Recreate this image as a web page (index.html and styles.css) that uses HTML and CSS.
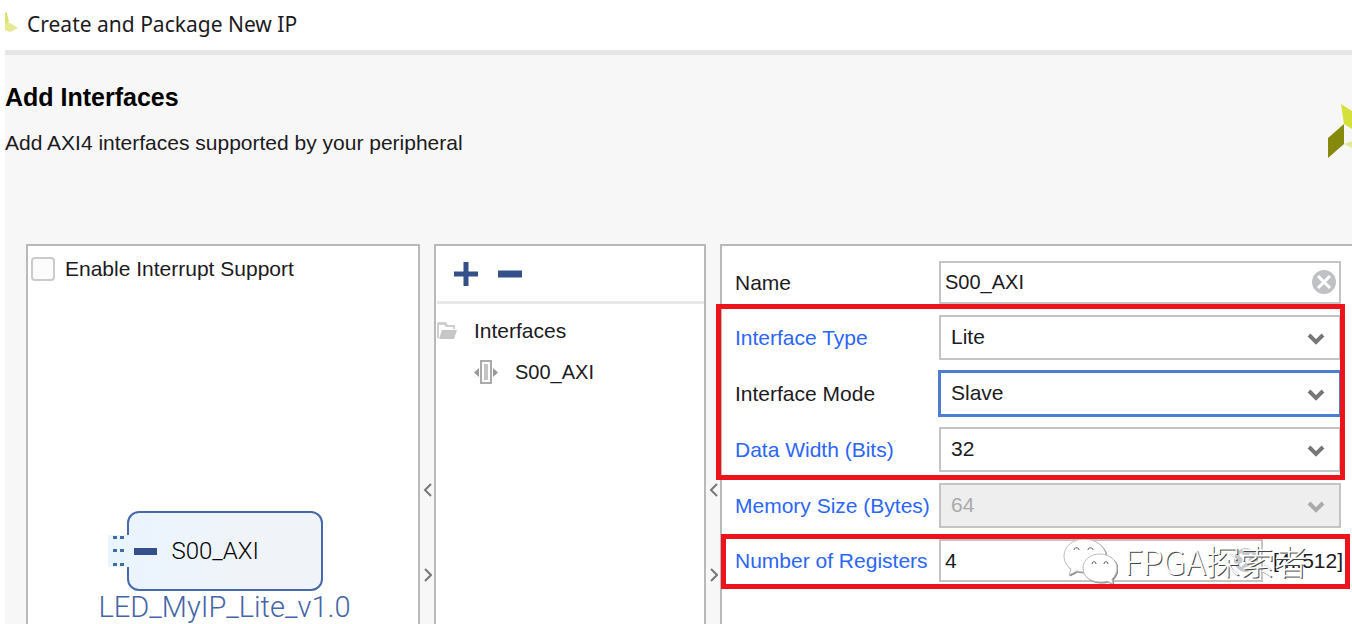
FILE: index.html
```html
<!DOCTYPE html>
<html lang="en">
<head>
<meta charset="utf-8">
<title>Create and Package New IP</title>
<link rel="stylesheet" href="styles.css">
</head>
<body>
<div class="window">
  <header class="titlebar">
    <svg class="titlebar-icon" width="14" height="22" viewBox="0 0 14 22" aria-hidden="true">
      <path d="M0 1 2 2 4 11 0 13z" fill="#dde36a"/>
      <path d="M0 12 5 12 13 17 5 21 0 19z" fill="#e4e98f"/>
    </svg>
    <span>Create and Package New IP</span>
  </header>

  <section class="intro">
    <div>
      <h1>Add Interfaces</h1>
      <p>Add AXI4 interfaces supported by your peripheral</p>
    </div>
    <svg class="logo" width="25" height="56" viewBox="0 0 25 56" aria-hidden="true">
      <path d="M14 0 25 7V25L17 20z" fill="#d5e03a"/>
      <path d="M17 20V40L1 54V34z" fill="#858a0c"/>
      <path d="M17 40 25 37V44z" fill="#e4ea94"/>
    </svg>
  </section>

  <main class="panes">
    <section class="pane preview">
      <label class="check"><input type="checkbox"><span>Enable Interrupt Support</span></label>
      <div class="diagram">
        <div class="node">
          <svg class="node-port" width="21" height="32" viewBox="0 0 21 32" aria-hidden="true">
            <path d="M0 0h21v32H0z" fill="#e9f4fd"/>
            <path d="M5 1h4v3H5zM12 1h4v3h-4zM5 14h4v3H5zM12 14h4v3h-4zM5 28h4v3H5zM12 28h4v3h-4z" fill="#3f6da3"/>
          </svg>
          <span class="node-bar"></span>
          <span>S00_AXI</span>
        </div>
        <div class="node-caption">LED_MyIP_Lite_v1.0</div>
      </div>
    </section>

    <div class="splitter">
      <button type="button" aria-label="Collapse left"><svg width="10" height="16" viewBox="0 0 10 16"><path d="M9 2 3 8l6 6"/></svg></button>
      <button type="button" aria-label="Collapse right"><svg width="10" height="16" viewBox="0 0 10 16"><path d="M3 2l6 6-6 6"/></svg></button>
    </div>

    <section class="pane interfaces">
      <div class="toolbar">
        <button type="button" aria-label="Add"><svg width="24" height="24" viewBox="0 0 24 24"><path d="M9.500 0h5v9.500H24v5h-9.500V24h-5v-9.500H0v-5h9.500z"/></svg></button>
        <button type="button" aria-label="Remove"><svg width="24" height="24" viewBox="0 0 24 24"><path d="M0 8.500h24v7H0z"/></svg></button>
      </div>
      <ul class="tree">
        <li class="tree-root">
          <svg width="20" height="18" viewBox="0 0 20 18" aria-hidden="true"><path d="M0 1 1 0h8l2 3h7v4h-2V5H9L7 3H2v13H0z" fill="#cfcfcf"/><path d="M5 8h15l-3 9H2z" fill="#c6c6c6"/></svg>
          <span>Interfaces</span>
        </li>
        <li class="tree-item">
          <svg width="24" height="24" viewBox="0 0 24 24" aria-hidden="true"><path d="M7 1h10v22H7z" fill="#fff" stroke="#aaa" stroke-width="2"/><path d="M10 4h4v16h-4z" fill="#c4c4c4"/><path d="M5 8v9L0 12.500zM19 8v9l5-4.500z" fill="#999"/></svg>
          <span>S00_AXI</span>
        </li>
      </ul>
    </section>

    <div class="splitter">
      <button type="button" aria-label="Collapse left"><svg width="10" height="16" viewBox="0 0 10 16"><path d="M9 2 3 8l6 6"/></svg></button>
      <button type="button" aria-label="Collapse right"><svg width="10" height="16" viewBox="0 0 10 16"><path d="M3 2l6 6-6 6"/></svg></button>
    </div>

    <form class="pane settings">
      <div class="row">
        <label for="name">Name</label>
        <div class="field">
          <input class="code" id="name" type="text" value="S00_AXI">
          <button class="clear" type="button" aria-label="Clear name"><svg width="24" height="24" viewBox="0 0 24 24"><circle cx="12" cy="12" r="12" fill="#bfc1c4"/><path d="M6 6l12 12M18 6 6 18" stroke="#fff" stroke-width="3"/></svg></button>
        </div>
      </div>
      <div class="group marked">
        <div class="row">
          <label class="changed" for="type">Interface Type</label>
          <div class="field">
            <select id="type"><option>Lite</option></select>
            <svg class="chevron" width="18" height="12" viewBox="0 0 18 12"><path d="M2 2l7 7 7-7"/></svg>
          </div>
        </div>
        <div class="row">
          <label for="mode">Interface Mode</label>
          <div class="field">
            <select class="active" id="mode"><option>Slave</option></select>
            <svg class="chevron" width="18" height="12" viewBox="0 0 18 12"><path d="M2 2l7 7 7-7"/></svg>
          </div>
        </div>
        <div class="row">
          <label class="changed" for="width">Data Width (Bits)</label>
          <div class="field">
            <select id="width"><option>32</option></select>
            <svg class="chevron" width="18" height="12" viewBox="0 0 18 12"><path d="M2 2l7 7 7-7"/></svg>
          </div>
        </div>
      </div>
      <div class="row">
        <label class="changed" for="memory">Memory Size (Bytes)</label>
        <div class="field">
          <select id="memory" disabled><option>64</option></select>
          <svg class="chevron" width="18" height="12" viewBox="0 0 18 12"><path d="M2 2l7 7 7-7"/></svg>
        </div>
      </div>
      <div class="row registers marked">
        <label class="changed" for="registers">Number of Registers</label>
        <div class="field">
          <input id="registers" type="text" value="4">
          <button class="clear" type="button" aria-label="Clear registers"><svg width="24" height="24" viewBox="0 0 24 24"><circle cx="12" cy="12" r="12" fill="#c6c8cb"/><path d="M6 6l12 12M18 6 6 18" stroke="#fff" stroke-width="3"/></svg></button>
        </div>
        <span class="range">[4..512]</span>
        <div class="watermark">
          <svg width="56" height="48" viewBox="0 0 56 48" aria-hidden="true">
            <path class="bubble" d="M22 2C10 2 2 10 2 19c0 6 3 10 7 13l-2 6 8-4c3 1 6 1 9 1 11 0 20-7 20-16S34 2 22 2z"/>
            <path class="bubble" d="M38 17c-10 0-17 6-17 14s7 14 17 14c3 0 5 0 7-1l6 3-1-5c3-3 5-6 5-11 0-8-8-14-17-14z"/>
            <path class="eyes" d="M12 13c0-3 5-3 5 0M26 13c0-3 5-3 5 0M30 27c0-3 4-3 4 0M42 27c0-3 4-3 4 0"/>
          </svg>
          <span lang="zh">FPGA探索者</span>
        </div>
      </div>
    </form>
  </main>
</div>
</body>
</html>
```
FILE: styles.css
```css
* {
  box-sizing: border-box;
}

body {
  margin: 0;
  overflow: hidden;
  background: #fff;
  color: #1c1a22;
  font: 21px/24px "Liberation Sans", Arial, sans-serif;
}

button {
  display: flex;
  padding: 0;
  border: 0;
  background: none;
}

.window {
  display: flex;
  flex-direction: column;
  height: 100vh;
  margin-left: 5px;
  background: #f7f7f7;
}

.titlebar {
  display: flex;
  align-items: center;
  gap: 8px;
  height: 55px;
  padding-bottom: 2px;
  border-bottom: 5px solid #e6e6e6;
  background: #fff;
  font-family: "Noto Sans", "Open Sans", sans-serif;
}

.titlebar-icon {
  margin-top: -4px;
}

.intro {
  display: flex;
  justify-content: space-between;
  height: 189px;
  padding-top: 27px;
}

.intro h1 {
  margin: 0;
  color: #000;
  font-size: 25px;
  line-height: 30px;
}

.intro p {
  margin: 19px 0 0;
}

.logo {
  margin-top: 22px;
}

.panes {
  display: grid;
  flex: 1;
  grid-template-columns: 394px 14px 272px 14px 1fr;
  min-height: 0;
  padding-left: 21px;
}

.pane {
  border: 2px solid #b9b9b9;
  border-bottom: 0;
  background: #fff;
}

.splitter {
  display: flex;
  flex-direction: column;
  align-items: center;
  gap: 69px;
  padding-top: 238px;
}

.splitter path {
  fill: none;
  stroke: #777;
  stroke-width: 2;
}

.check {
  display: flex;
  align-items: center;
  gap: 10px;
  padding: 11px 3px;
}

.check input {
  width: 24px;
  height: 24px;
  margin: 0;
  border: 2px solid #cbcbcb;
  border-radius: 4px;
  background: #fcfcfc;
  appearance: none;
}

.diagram {
  display: flex;
  flex-direction: column;
  align-items: center;
  padding: 219px 0 0 3px;
  font-family: Roboto, sans-serif;
  font-weight: 300;
}

.node {
  position: relative;
  display: flex;
  align-items: center;
  gap: 15px;
  width: 196px;
  height: 80px;
  padding-left: 5px;
  border: 2px solid #4769ac;
  border-radius: 12px;
  background: linear-gradient(100deg, #eaf4ff, #f0f4f8 60%);
  color: #000;
  font-size: 24px;
}

.node-port {
  position: absolute;
  top: 22px;
  right: 100%;
}

.node-bar {
  width: 23px;
  height: 7px;
  background: #34508a;
}

.node-caption {
  color: #4565a8;
  font-size: 29px;
  line-height: 32px;
}

.toolbar {
  display: flex;
  gap: 20px;
  margin: 0 0 0 1px;
  padding: 16px 17px 15px;
  border-bottom: 3px solid #e8e8e8;
}

.toolbar path {
  fill: #34508a;
}

.tree {
  display: grid;
  gap: 17px;
  margin: 0;
  padding: 15px 1px;
  list-style: none;
}

.tree li {
  display: flex;
  align-items: center;
  gap: 17px;
}

.tree .tree-item {
  padding-left: 37px;
  font-size: 20px;
}

.settings {
  display: flex;
  flex-direction: column;
  gap: 11px;
  padding: 15px 11px 0 13px;
  border-right: 0;
}

.group {
  display: grid;
  gap: 11px;
}

.row {
  display: grid;
  grid-template-columns: 204px 1fr;
  align-items: center;
}

.registers {
  grid-template-columns: 204px 1fr 78px;
}

.range {
  padding-left: 10px;
  white-space: nowrap;
}

.changed {
  color: #2b66f6;
}

.field {
  position: relative;
}

.field input,
.field select {
  display: block;
  width: 100%;
  border: 2px solid #c4c4c4;
  border-radius: 0;
  background: #fff;
  color: #1c1a22;
  font: inherit;
  appearance: none;
}

.field input {
  height: 43px;
  padding: 0 40px 0 4px;
}

.field .code {
  font-size: 20px;
}

.field select {
  height: 45px;
  padding: 0 40px 2px 10px;
}

.field .active {
  border-color: #4d7cd0;
  outline: 1px solid #4d7cd0;
}

.field select:disabled {
  background: #eee;
  color: #aaa;
  opacity: 1;
}

.clear {
  position: absolute;
  top: 9px;
  right: 5px;
}

.chevron {
  position: absolute;
  top: 18px;
  right: 16px;
  fill: none;
  stroke: #777;
  stroke-width: 4;
  pointer-events: none;
}

select:disabled + .chevron {
  stroke: #aaa;
}

.marked {
  position: relative;
}

.marked::after {
  position: absolute;
  inset: -11px -4px -8px -19px;
  border: 5px solid #ec131c;
  content: "";
  pointer-events: none;
}

.registers.marked::after {
  inset: -5px -9px -7px -14px;
}

.watermark {
  position: absolute;
  top: -2px;
  right: 33px;
  display: flex;
  align-items: center;
  gap: 6px;
  color: #fff;
  font: 300 34px/48px "Noto Sans CJK SC", sans-serif;
  text-shadow: 1px 1px 0 #444;
  white-space: nowrap;
  pointer-events: none;
}

.bubble {
  fill: #fff;
  stroke: #bbb;
  stroke-width: 1;
  filter: drop-shadow(1px 1px 0 #888);
}

.eyes {
  fill: none;
  stroke: #555;
  stroke-width: 1;
}
```
